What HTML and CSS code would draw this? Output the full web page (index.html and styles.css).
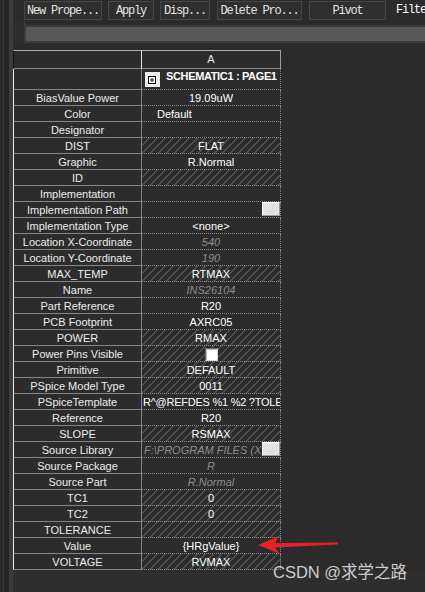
FILE: index.html
```html
<!DOCTYPE html>
<html>
<head>
<meta charset="utf-8">
<link rel="stylesheet" href="styles.css">
</head>
<body>
<div class="app">
  <div class="strip"></div>
  <div class="main">
    <div class="toolbar">
      <button class="tb tb-new">New Prope...</button>
      <button class="tb tb-apply">Apply</button>
      <button class="tb tb-disp">Disp...</button>
      <button class="tb tb-del">Delete Pro...</button>
      <button class="tb tb-pivot">Pivot</button>
      <span class="filter">Filte</span>
    </div>
    <div class="searchbar"></div>
    <div class="sheet">
      <div class="head">
        <div class="corner"></div>
        <div class="colhead">A</div>
      </div>
      <div class="rows">
        <div class="lbl"></div>
        <div class="val val-top">
          <svg class="expand" width="15" height="15" viewBox="0 0 15 15">
            <rect x="0" y="0" width="15" height="15" fill="#ececec"/>
            <rect x="3.5" y="4.5" width="7" height="7" fill="#ffffff" stroke="#111" stroke-width="1"/>
            <path d="M5 8h4M7 6v4" stroke="#111" stroke-width="1"/>
          </svg>
          <span class="title">SCHEMATIC1 : PAGE1</span>
        </div>

        <div class="lbl">BiasValue Power</div><div class="val">19.09uW</div>
        <div class="lbl">Color</div><div class="val val-left">Default</div>
        <div class="lbl">Designator</div><div class="val"></div>
        <div class="lbl">DIST</div><div class="val hatch">FLAT</div>
        <div class="lbl">Graphic</div><div class="val">R.Normal</div>
        <div class="lbl">ID</div><div class="val hatch"></div>
        <div class="lbl">Implementation</div><div class="val"></div>
        <div class="lbl">Implementation Path</div>
        <div class="val val-btn"><span class="txt"></span><span class="ell">...</span></div>
        <div class="lbl">Implementation Type</div><div class="val">&lt;none&gt;</div>
        <div class="lbl">Location X-Coordinate</div><div class="val dim">540</div>
        <div class="lbl">Location Y-Coordinate</div><div class="val dim">190</div>
        <div class="lbl">MAX_TEMP</div><div class="val hatch">RTMAX</div>
        <div class="lbl">Name</div><div class="val dim">INS26104</div>
        <div class="lbl">Part Reference</div><div class="val">R20</div>
        <div class="lbl">PCB Footprint</div><div class="val">AXRC05</div>
        <div class="lbl">POWER</div><div class="val hatch">RMAX</div>
        <div class="lbl">Power Pins Visible</div><div class="val hatch val-chk"><span class="chk"></span></div>
        <div class="lbl">Primitive</div><div class="val hatch">DEFAULT</div>
        <div class="lbl">PSpice Model Type</div><div class="val hatch">0011</div>
        <div class="lbl">PSpiceTemplate</div><div class="val val-tmpl">R^@REFDES %1 %2 ?TOLE</div>
        <div class="lbl">Reference</div><div class="val">R20</div>
        <div class="lbl">SLOPE</div><div class="val hatch">RSMAX</div>
        <div class="lbl">Source Library</div>
        <div class="val val-btn"><span class="txt dim">F:\PROGRAM FILES (X</span><span class="ell">...</span></div>
        <div class="lbl">Source Package</div><div class="val dim">R</div>
        <div class="lbl">Source Part</div><div class="val dim">R.Normal</div>
        <div class="lbl">TC1</div><div class="val hatch">0</div>
        <div class="lbl">TC2</div><div class="val hatch">0</div>
        <div class="lbl">TOLERANCE</div><div class="val hatch"></div>
        <div class="lbl">Value</div><div class="val">{HRgValue}</div>
        <div class="lbl">VOLTAGE</div><div class="val hatch">RVMAX</div>
      </div>
    </div>
  </div>
</div>
<svg class="arrow" width="90" height="25" viewBox="0 0 90 25">
  <polygon points="3,12 24,3 20,10 83,9.5 83,11.5 20,14.5 25,21" fill="#e5222b"/>
</svg>
<div class="watermark">CSDN @求学之路</div>
</body>
</html>
```

FILE: styles.css
```css
html, body {
  margin: 0;
  padding: 0;
}

body {
  width: 425px;
  height: 592px;
  overflow: hidden;
  background: #2d2d2d;
  position: relative;
  font-family: "Liberation Sans", Arial, sans-serif;
}

.app {
  display: flex;
  height: 592px;
}

.strip {
  width: 13px;
  flex: none;
  background: linear-gradient(to right,
    #292929 0, #292929 3px,
    #383838 3px, #383838 4px,
    #262626 4px, #262626 9px,
    #3b3b3b 9px, #3b3b3b 13px);
}

.main {
  flex: 1;
  min-width: 0;
  overflow: hidden;
  background: #2e2e2e;
}

.toolbar {
  display: flex;
  align-items: flex-start;
  gap: 6px;
  height: 20px;
  box-sizing: border-box;
  padding: 1px 0 0 11px;
  white-space: nowrap;
  background: #2b2b2b;
}

.tb {
  flex: none;
  height: 19px;
  box-sizing: border-box;
  margin: 0;
  padding: 0;
  border: 1px solid #474747;
  background: #2f2f2f;
  color: #e4e4e4;
  font-family: "Liberation Mono", "Courier New", monospace;
  font-size: 12px;
  letter-spacing: -1.2px;
  line-height: 16px;
  text-align: center;
}

.tb-new { width: 78px; }
.tb-apply { width: 46px; }
.tb-disp { width: 50px; }
.tb-del { width: 85px; margin-left: 1px; }
.tb-pivot { width: 77px; margin-left: 1px; }

.filter {
  flex: none;
  margin-left: 4px;
  color: #ffffff;
  font-family: "Liberation Mono", "Courier New", monospace;
  font-size: 12px;
  letter-spacing: -1.2px;
  line-height: 18px;
}

.searchbar {
  height: 23px;
  box-sizing: border-box;
  margin-left: 11px;
  border-top: 5px solid #2b2b2b;
  border-bottom: 2px solid #3b3b3b;
  border-left: 2px solid #3b3b3b;
  background: #585858;
  box-shadow: inset 0 2px 0 #3b3b3b;
}

.sheet {
  padding-top: 7px;
  background: #2b2b2b;
}

.head {
  display: flex;
  width: 268px;
  height: 19px;
}

.corner {
  width: 128px;
  box-sizing: border-box;
  border-top: 1px solid #b0b0b0;
  border-left: 1px solid #141414;
  border-bottom: 1px solid #888888;
  background: #2c2c2c;
}

.colhead {
  width: 140px;
  box-sizing: border-box;
  border-top: 1px solid #b0b0b0;
  border-left: 1px solid #e4e4e4;
  border-right: 1px solid #9c9c9c;
  border-bottom: 1px solid #888888;
  background: #2c2c2c;
  color: #dfe7f2;
  font-size: 11px;
  line-height: 17px;
  text-align: center;
}

.rows {
  display: grid;
  width: 268px;
  grid-template-columns: 129px 139px;
  grid-template-rows: 21px;
  grid-auto-rows: 16px;
  font-size: 11px;
}

.lbl {
  box-sizing: border-box;
  border-left: 1px solid #ececec;
  border-right: 1px solid #858585;
  border-bottom: 1px solid #858585;
  background: #2c2c2c;
  color: #ededed;
  line-height: 16px;
  text-align: center;
  white-space: nowrap;
  overflow: hidden;
}

.val {
  box-sizing: border-box;
  border-right: 1px dotted #8c8c8c;
  border-bottom: 1px dotted #8c8c8c;
  background-color: #2c2c2c;
  color: #ffffff;
  line-height: 16px;
  text-align: center;
  white-space: nowrap;
  overflow: hidden;
}

.hatch {
  background-image: repeating-linear-gradient(135deg,
    transparent 0, transparent 4.66px,
    #4f4f4f 4.66px, #4f4f4f 5.66px);
}

.dim {
  color: #8d8d8d;
  font-style: italic;
}

.val-left {
  text-align: left;
  padding-left: 15px;
}

.val-tmpl {
  text-align: left;
  padding-left: 1px;
  letter-spacing: -0.25px;
}

.val-top {
  display: flex;
  align-items: flex-start;
  padding-left: 3px;
}

.expand {
  flex: none;
  margin-top: 3px;
}

.title {
  margin-left: 6px;
  font-weight: bold;
  letter-spacing: -0.35px;
  line-height: 14px;
  color: #ffffff;
}

.val-btn {
  display: flex;
  align-items: flex-start;
}

.txt {
  flex: 1;
  min-width: 0;
  overflow: hidden;
  text-align: left;
  padding-left: 2px;
}

.ell {
  flex: none;
  width: 18px;
  height: 14px;
  box-sizing: border-box;
  border: 1px solid;
  border-color: #fbfbfb #9a9a9a #9a9a9a #fbfbfb;
  background: #e3e3e3;
  color: #a6a6a6;
  font-size: 8px;
  font-style: normal;
  line-height: 14px;
  letter-spacing: 0.5px;
  text-align: center;
}

.val-chk {
  display: flex;
  justify-content: center;
  align-items: flex-start;
}

.chk {
  width: 13px;
  height: 13px;
  margin-top: 2px;
  box-sizing: border-box;
  border: 1px solid;
  border-color: #6a6a6a #d8d8d8 #d8d8d8 #6a6a6a;
  background: #ffffff;
  box-shadow: inset 1px 1px 0 #bdbdbd;
}

.arrow {
  position: absolute;
  left: 255px;
  top: 533px;
}

.watermark {
  position: absolute;
  left: 273px;
  top: 562px;
  font-family: "Liberation Sans", "Noto Sans CJK SC", sans-serif;
  font-size: 16.5px;
  line-height: 20px;
  color: #cdcdcd;
  white-space: nowrap;
}
```
